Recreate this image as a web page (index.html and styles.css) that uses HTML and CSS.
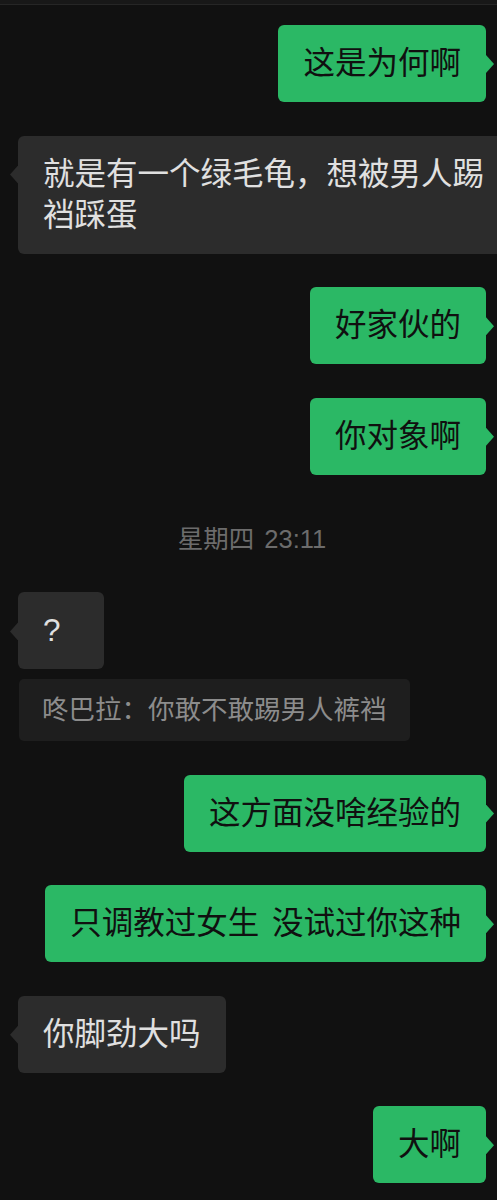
FILE: index.html
```html
<!DOCTYPE html>
<html lang="zh-CN">
<head>
<meta charset="utf-8">
<title>聊天</title>
<link rel="stylesheet" href="styles.css">
</head>
<body>
<div class="topbar"></div>
<main class="chat">
  <div class="row out"><div class="bubble green">这是为何啊</div></div>
  <div class="row in"><div class="bubble gray">就是有一个绿毛龟，想被男人踢裆踩蛋</div></div>
  <div class="row out"><div class="bubble green">好家伙的</div></div>
  <div class="row out"><div class="bubble green">你对象啊</div></div>
  <div class="time">星期四 23:11</div>
  <div class="row in"><div class="bubble gray minw">?</div></div>
  <div class="row in quote-row"><div class="quote">咚巴拉：你敢不敢踢男人裤裆</div></div>
  <div class="row out"><div class="bubble green">这方面没啥经验的</div></div>
  <div class="row out"><div class="bubble green">只调教过女生 没试过你这种</div></div>
  <div class="row in"><div class="bubble gray">你脚劲大吗</div></div>
  <div class="row out"><div class="bubble green">大啊</div></div>
</main>
</body>
</html>
```
FILE: styles.css
```css
html, body {
  margin: 0;
  padding: 0;
  background: #111111;
}
body {
  width: 497px;
  height: 1200px;
  overflow: hidden;
  font-family: "Liberation Sans", "Noto Sans CJK SC", sans-serif;
}
.topbar {
  height: 4px;
  background: #181818;
  border-bottom: 1px solid #262626;
}
.chat {
  display: flex;
  flex-direction: column;
  padding: 20px 11px 0 18px;
}
.row {
  display: flex;
  margin-bottom: 33.6px;
}
.row.out { justify-content: flex-end; }
.row.in { justify-content: flex-start; }
.bubble {
  position: relative;
  flex-shrink: 0;
  box-sizing: border-box;
  max-width: 495px;
  padding: 18px 25px;
  border-radius: 6px;
  font-size: 31.5px;
  line-height: 41px;
  word-spacing: 4px;
  word-break: break-all;
}
.bubble::after {
  content: "";
  position: absolute;
  top: 30px;
  width: 8px;
  height: 18px;
}
.green {
  background: #2bb865;
  color: #101010;
}
.green::after {
  right: -8px;
  background: #2bb865;
  clip-path: polygon(0 0, 100% 50%, 0 100%);
}
.gray {
  background: #2c2c2c;
  color: #e0e0e0;
}
.gray::after {
  left: -8px;
  background: #2c2c2c;
  clip-path: polygon(100% 0, 0 50%, 100% 100%);
}
.minw { min-width: 86px; }
.time {
  text-align: center;
  font-size: 25.5px;
  line-height: 30px;
  word-spacing: 3px;
  color: #6c6c6c;
  margin: 16px 0 38px;
}
.quote-row { margin-top: -24px; }
.quote {
  background: #1e1e1e;
  color: #8c8c8c;
  font-size: 26.5px;
  line-height: 34px;
  padding: 14px 23px;
  border-radius: 5px;
  margin-left: 1px;
}
```
